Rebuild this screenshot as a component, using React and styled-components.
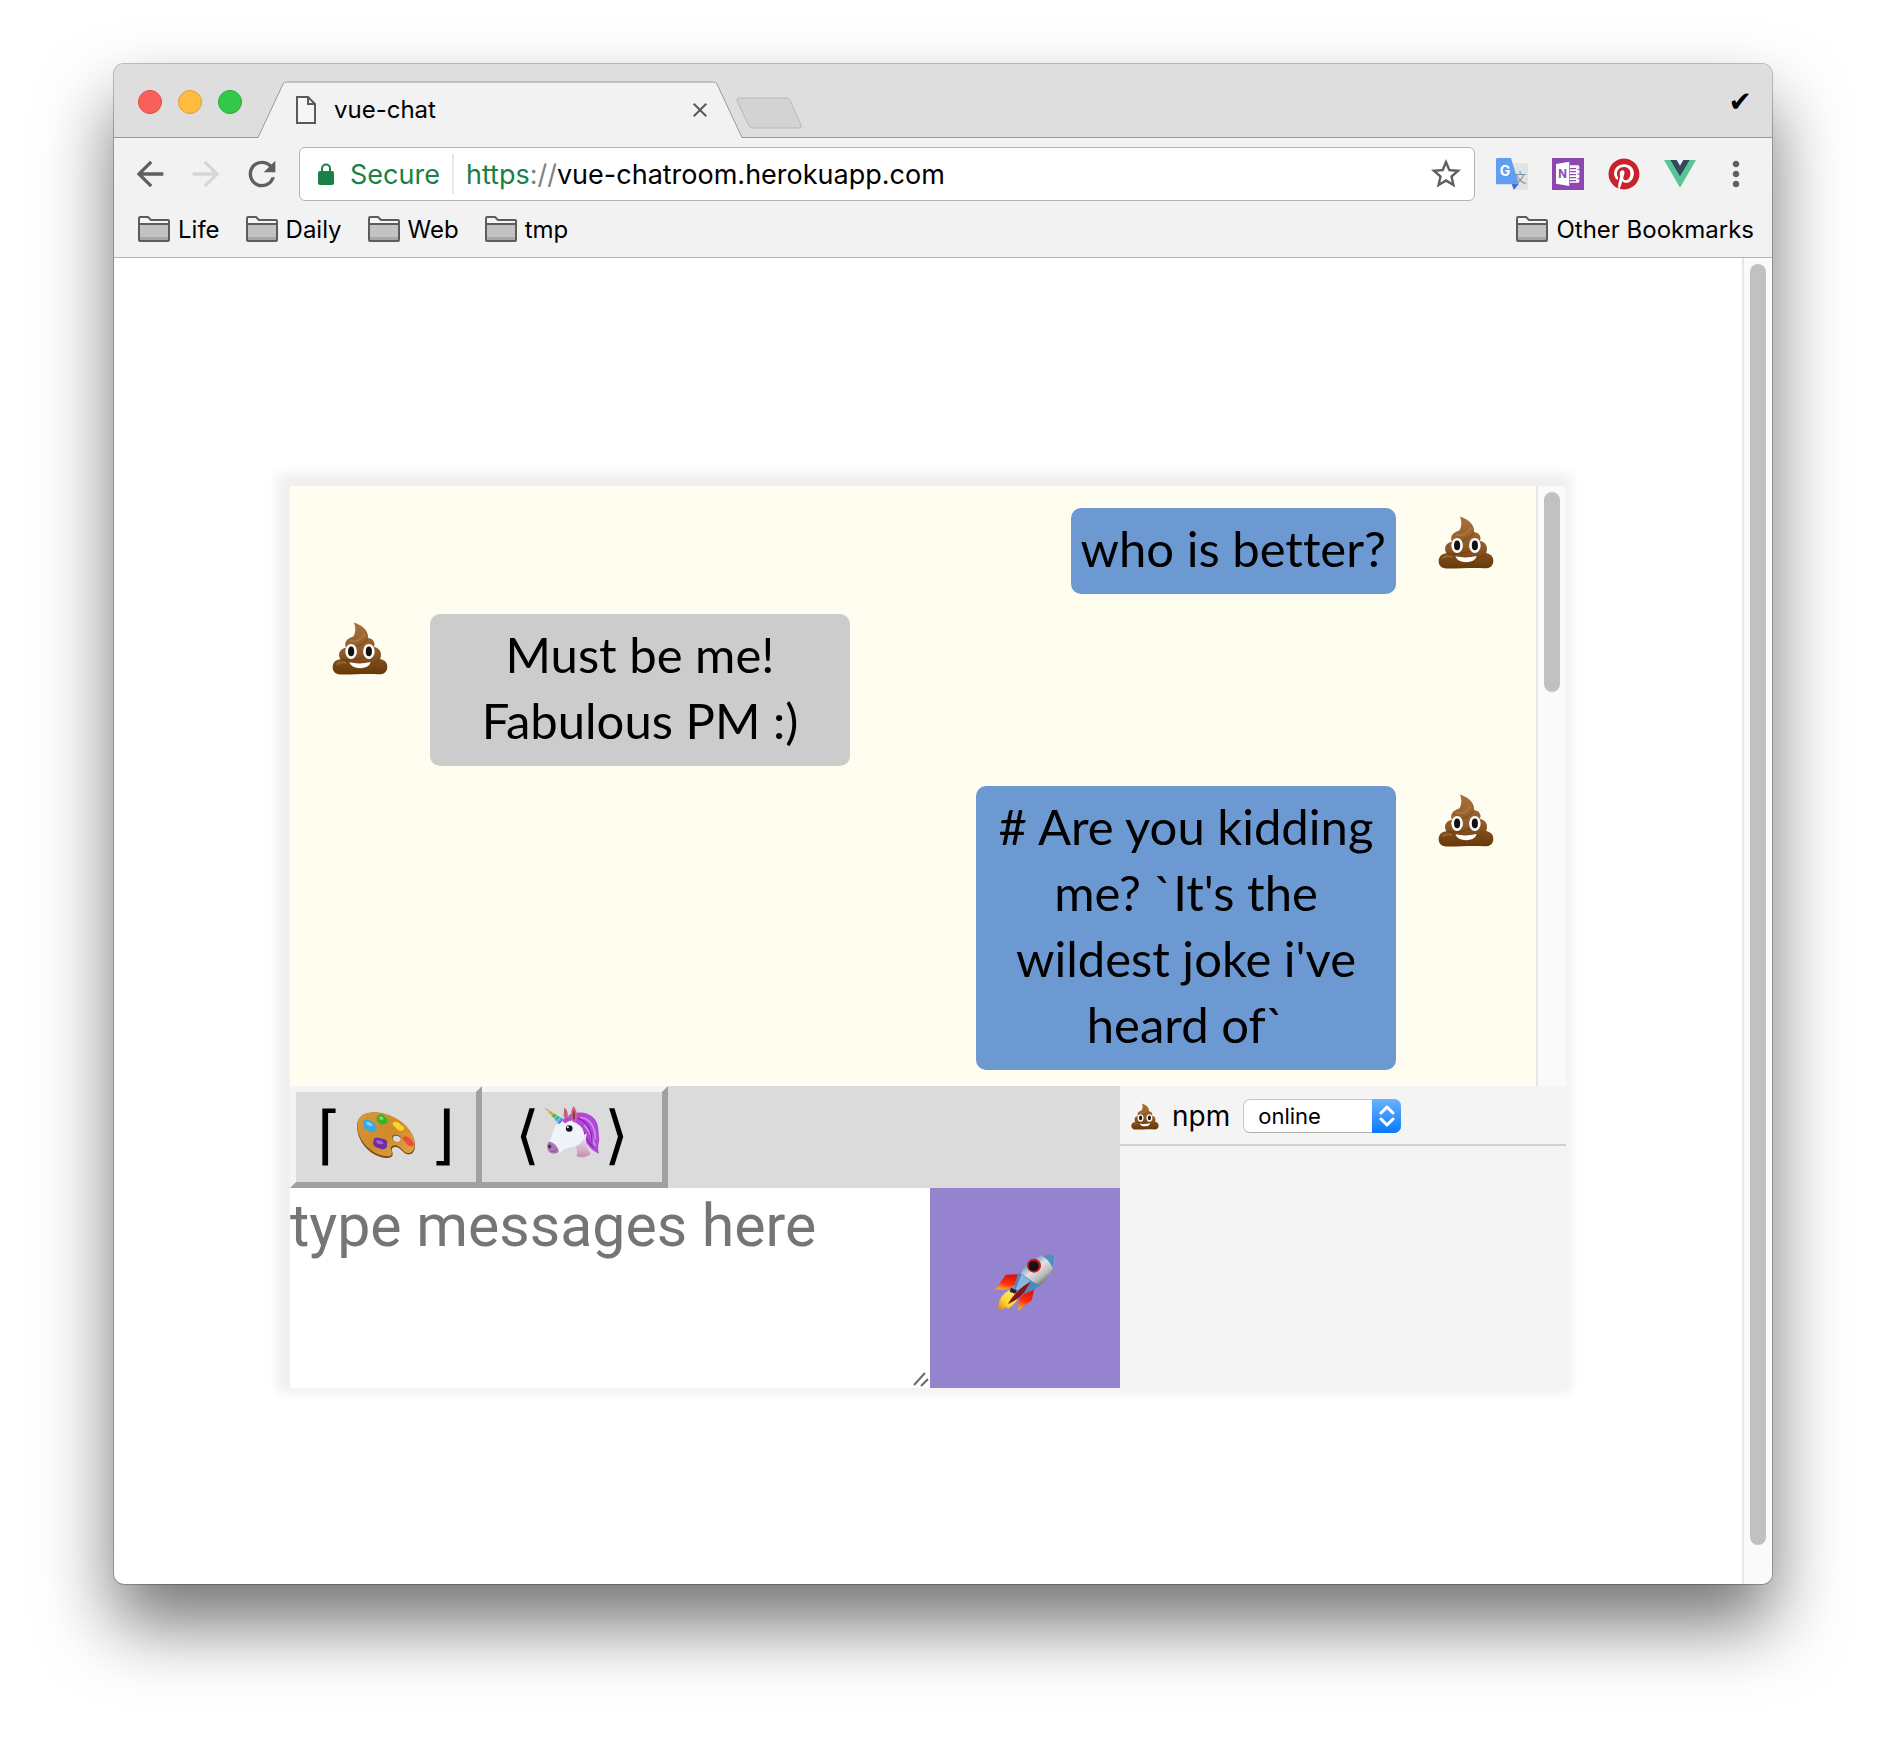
import React from "react";
import styled, { createGlobalStyle } from "styled-components";
import { MdArrowBack, MdArrowForward, MdRefresh, MdStarBorder, MdMoreVert, MdClose } from "react-icons/md";
import { FaPinterest } from "react-icons/fa";

const GlobalStyle = createGlobalStyle`
  *, *::before, *::after { box-sizing: border-box; }
  body {
    margin: 0;
    background: #fff;
    color: #000;
    font-family: Inter, "Liberation Sans", sans-serif;
    font-size: 24px;
  }
  button, input, select, textarea { font: inherit; color: inherit; }
  button { border: 0; padding: 0; background: none; cursor: pointer; }
  svg { display: block; flex: none; }
`;

/* ---------- window frame ---------- */

const Desktop = styled.div`
  padding: 64px 112px 160px 114px;
`;

const Window = styled.div`
  border-radius: 10px;
  background: #fff;
  overflow: hidden;
  box-shadow: 0 0 0 1px rgba(0, 0, 0, 0.24), 0 40px 72px rgba(0, 0, 0, 0.55);
`;

const TitleBar = styled.header`
  display: flex;
  align-items: center;
  height: 74px;
  padding: 2px 20px 0 24px;
  background: #dedede;
  border-bottom: 1px solid #999;
`;

const Lights = styled.div`
  display: flex;
  gap: 16px;
  margin-right: 16px;
`;

const Light = styled.button`
  width: 24px;
  height: 24px;
  border-radius: 50%;
  background: ${(p) => p.$fill};
  border: 1px solid ${(p) => p.$edge};
`;

const Tab = styled.div`
  position: relative;
  display: flex;
  align-items: center;
  align-self: flex-end;
  gap: 18px;
  width: 484px;
  height: 57px;
  margin-bottom: -1px;
  padding: 0 30px 0 38px;
`;

const TabShape = styled.svg`
  position: absolute;
  inset: 0;
`;

const TabTitle = styled.span`
  position: relative;
  flex: 1;
`;

const TabIcon = styled.svg`
  position: relative;
`;

const TabClose = styled.button`
  position: relative;
  width: 24px;
  height: 24px;
  color: #5a5a5a;
`;

const NewTab = styled.button`
  align-self: flex-end;
  margin: 0 0 8px -6px;
`;

const Profile = styled.span`
  margin-left: auto;
  font-family: "DejaVu Sans", sans-serif;
  font-size: 28px;
`;

/* ---------- toolbar and bookmarks ---------- */

const Toolbar = styled.nav`
  display: flex;
  align-items: center;
  padding: 9px 16px 0;
  background: #f2f2f2;
`;

const NavGroup = styled.div`
  display: flex;
  gap: 16px;
  margin-right: 17px;
`;

const NavButton = styled.button`
  width: 40px;
  height: 40px;
  color: ${(p) => (p.$dim ? "#d6d6d6" : "#5f5f5f")};
`;

const Omnibox = styled.div`
  display: flex;
  align-items: center;
  flex: 1;
  height: 54px;
  padding: 0 10px 0 17px;
  background: #fff;
  border: 1px solid #b4b4b4;
  border-radius: 6px;
  font-size: 27px;
`;

const Secure = styled.span`
  padding: 0 12px 0 15px;
  color: #1a8045;
`;

const Scheme = styled.label`
  display: flex;
  align-items: center;
  align-self: center;
  height: 40px;
  padding-left: 12px;
  border-left: 2px solid #e8e8e8;
  color: #808080;
`;

const SchemeName = styled.span`
  color: #1a8045;
`;

const Address = styled.input`
  flex: 1;
  min-width: 0;
  padding: 0;
  border: 0;
  outline: 0;
  background: transparent;
`;

const StarButton = styled.button`
  width: 36px;
  height: 36px;
  color: #5f5f5f;
`;

const Extensions = styled.div`
  display: flex;
  align-items: center;
  gap: 24px;
  margin: 0 20px 0 21px;
`;

const PinDisc = styled.span`
  display: block;
  border-radius: 50%;
  background: #fff;
  color: #c8232c;
`;

const Bookmarks = styled.div`
  display: flex;
  align-items: center;
  gap: 26px;
  height: 57px;
  padding: 0 18px 0 24px;
  background: #f2f2f2;
  border-bottom: 1px solid #b4b4b4;
`;

const Bookmark = styled.a`
  display: flex;
  align-items: center;
  gap: 8px;
  color: inherit;
  text-decoration: none;
  margin-left: ${(p) => (p.$last ? "auto" : "0")};
`;

/* ---------- page ---------- */

const Viewport = styled.div`
  display: grid;
  grid-template-columns: 1fr 30px;
`;

const Track = styled.div`
  padding: 6px;
  background: #fafafa;
  border-left: 2px solid #e7e7e7;
`;

const Thumb = styled.div`
  width: 16px;
  height: ${(p) => p.$length};
  border-radius: 8px;
  background: #c1c1c1;
`;

const Page = styled.main`
  padding: 228px 176px 196px;
`;

const Chat = styled.section`
  background: #f4f4f4;
  box-shadow: -4px -4px 10px 9px #f0f0f0;
`;

const Scroller = styled.div`
  display: grid;
  grid-template-columns: 1fr 30px;
`;

const Messages = styled.div`
  display: flex;
  flex-direction: column;
  gap: 20px;
  padding: 22px 0 16px;
  background: #fffcf0;
`;

const Message = styled.div`
  display: flex;
  flex-direction: ${(p) => (p.$own ? "row-reverse" : "row")};
  align-items: flex-start;
`;

const Avatar = styled.div`
  display: flex;
  justify-content: center;
  width: 140px;
  padding-top: 8px;
`;

const Bubble = styled.p`
  max-width: 420px;
  margin: 0;
  padding: 7px 10px 13px;
  border-radius: 10px;
  background: ${(p) => (p.$own ? "#6c99d2" : "#ccc")};
  font-family: Lato, "Liberation Sans", sans-serif;
  font-size: 49px;
  line-height: 66px;
  font-variant-ligatures: none;
  text-align: center;
`;

const Lower = styled.div`
  display: grid;
  grid-template-columns: 1fr 446px;
`;

const Tools = styled.div`
  display: flex;
  height: 102px;
  background: #dbdbdb;
`;

const Tool = styled.button`
  display: flex;
  align-items: center;
  justify-content: center;
  gap: ${(p) => p.$gap};
  width: ${(p) => (p.$joined ? "186px" : "192px")};
  padding-bottom: 5px;
  border: 6px solid;
  border-color: #f4f4f4 #a0a0a0 #a0a0a0 #f4f4f4;
  border-left-width: ${(p) => (p.$joined ? "0" : "6px")};
  background: #dbdbdb;
  font-family: "DejaVu Sans", sans-serif;
  font-size: 64px;
  line-height: 1;
`;

const Composer = styled.form`
  display: grid;
  grid-template-columns: 1fr 190px;
  height: 200px;
`;

const Draft = styled.div`
  position: relative;
  display: grid;
`;

const DraftInput = styled.textarea`
  width: 100%;
  padding: 0;
  border: 0;
  outline: 0;
  resize: none;
  background: #fff;
  font-family: Roboto, "Liberation Sans", sans-serif;
  font-size: 59px;
  line-height: 76px;
  &::placeholder { color: #757575; opacity: 1; }
`;

const Grip = styled.svg`
  position: absolute;
  right: 0;
  bottom: 0;
`;

const Send = styled.button`
  display: grid;
  place-items: center;
  padding-bottom: 10px;
  background: #9683cf;
`;

const People = styled.aside`
  background: #f4f4f4;
`;

const Person = styled.div`
  display: flex;
  align-items: center;
  gap: 13px;
  height: 60px;
  padding: 2px 0 0 11px;
  border-bottom: 2px solid #d0d0d0;
`;

const Name = styled.label`
  font-size: 28px;
`;

const Status = styled.div`
  position: relative;
`;

const StatusSelect = styled.select`
  appearance: none;
  display: block;
  width: 158px;
  height: 34px;
  padding: 0 30px 0 14px;
  border: 1px solid #c6c6c6;
  border-bottom-color: #adadad;
  border-radius: 7px;
  background: #fff;
  font-size: 22px;
`;

const Stepper = styled.span`
  position: absolute;
  top: 0;
  right: 0;
  display: grid;
  place-items: center;
  width: 29px;
  height: 34px;
  border-radius: 0 7px 7px 0;
  background: linear-gradient(#6cb3fa, #067aff);
  pointer-events: none;
`;

/* ---------- drawings ---------- */

const Poop = ({ width = 56, height = 53 }) => (
  <svg width={width} height={height} viewBox="-1 -1 164 155" aria-hidden="true">
    <defs>
      <linearGradient id="poop-body" x1="0" y1="0" x2="0" y2="1">
        <stop offset="0" stopColor="#a8713a" />
        <stop offset="0.6" stopColor="#8d5827" />
        <stop offset="1" stopColor="#653805" />
      </linearGradient>
    </defs>
    <path d="M63 0C80 6 106 18 105 46C120 48 127 60 122 72C140 74 147 92 140 107C155 110 162 120 161 132C160 147 148 153 134 152C100 149 70 153 28 153C10 153 0 144 1 130C1 118 10 109 24 108C14 94 22 76 40 74C34 60 40 48 60 42C68 34 70 16 63 0Z" fill="url(#poop-body)" />
    <path d="M42 72C66 76 92 66 103 48M26 108C60 114 110 104 122 74M30 110C70 128 124 126 139 109" fill="none" stroke="#5f350b" strokeOpacity="0.4" strokeWidth="4" />
    <path d="M52 54C70 58 88 50 94 34M14 122C20 116 28 116 38 118" fill="none" stroke="#c48d55" strokeOpacity="0.4" strokeWidth="6" strokeLinecap="round" />
    <ellipse cx="55" cy="85" rx="17" ry="22" fill="#fff" />
    <ellipse cx="107" cy="85" rx="17" ry="22" fill="#fff" />
    <ellipse cx="55" cy="85" rx="9" ry="14" fill="#111" />
    <ellipse cx="107" cy="85" rx="9" ry="14" fill="#111" />
    <path d="M50 117Q81 124 112 116C108 140 56 140 50 117Z" fill="#fff" />
  </svg>
);

const Rocket = () => (
  <svg width="59" height="58" viewBox="47 43 177 174" aria-hidden="true">
    <defs>
      <linearGradient id="rocket-body" x1="0.25" y1="0.2" x2="0.75" y2="0.8">
        <stop offset="0" stopColor="#5f87aa" />
        <stop offset="0.4" stopColor="#e2e4e2" />
        <stop offset="0.7" stopColor="#b9bcbb" />
        <stop offset="1" stopColor="#55595c" />
      </linearGradient>
      <linearGradient id="rocket-fin" x1="0.6" y1="0" x2="0.3" y2="1">
        <stop offset="0" stopColor="#d81408" />
        <stop offset="0.55" stopColor="#fb2d0c" />
        <stop offset="1" stopColor="#fcae2c" />
      </linearGradient>
      <linearGradient id="rocket-fire" x1="1" y1="0" x2="0" y2="1">
        <stop offset="0" stopColor="#fff08a" />
        <stop offset="0.6" stopColor="#fcd62c" />
        <stop offset="1" stopColor="#ee6d18" />
      </linearGradient>
    </defs>
    <path d="M90 150C66 160 54 184 55 196L51 212L62 206L66 211L76 203L84 207C98 198 112 184 114 168Z" fill="url(#rocket-fire)" />
    <path d="M113 104L76 105L46 149L84 151L104 134Z" fill="url(#rocket-fin)" />
    <path d="M162 148L154 182L113 213L116 176L134 160Z" fill="url(#rocket-fin)" />
    <path d="M221 47C190 40 158 56 138 78C120 97 107 120 101 144L121 162C146 160 176 144 196 120C215 98 226 72 221 47Z" fill="url(#rocket-body)" />
    <path d="M118 98L157 126L180 137C162 152 140 161 121 162L101 144C104 128 110 112 118 98Z" fill="#4f86bd" />
    <path d="M124 104L150 124L112 153L106 148Z" fill="#8ab6dd" />
    <path d="M221 47C208 43 196 45 186 49C198 56 210 68 217 84C222 72 223 60 221 47Z" fill="#4f8fc6" />
    <path d="M92 144L110 152L104 162L88 156Z" fill="#23272c" />
    <path d="M150 128C128 138 100 162 83 193C104 184 128 168 136 150Z" fill="#8c1410" />
    <circle cx="161" cy="78" r="21" fill="#c4161c" />
    <circle cx="160" cy="79" r="15" fill="#101216" />
  </svg>
);

const Palette = () => (
  <svg width="60" height="48" viewBox="259 148 181 145" aria-hidden="true">
    <defs>
      <linearGradient id="palette-wood" x1="0" y1="0" x2="1" y2="1">
        <stop offset="0" stopColor="#d69a3c" />
        <stop offset="0.5" stopColor="#cf8a2b" />
        <stop offset="1" stopColor="#e0a648" />
      </linearGradient>
    </defs>
    <path d="M262 192C262 162 290 149 325 153C372 159 412 187 429 220C441 246 440 275 421 279C405 281 400 268 388 260C378 253 365 257 367 267C373 280 370 291 354 290C320 289 285 265 270 230C264 215 262 205 262 192Z" fill="#7a4a12" />
    <path d="M263 189C263 160 291 149 325 152C372 158 411 185 428 217C440 242 439 270 421 275C405 277 400 263 388 255C377 248 362 253 364 263C370 276 368 286 354 285C320 284 286 260 271 226C265 212 263 202 263 189Z" fill="url(#palette-wood)" />
    <ellipse cx="381" cy="230" rx="14" ry="11" transform="rotate(15 381 230)" fill="#8a5a1e" />
    <ellipse cx="382" cy="232" rx="12" ry="9" transform="rotate(15 382 232)" fill="#dbdbdb" />
    <path d="M281 186C277 174 292 170 302 177C316 182 326 196 318 206C308 216 296 212 294 204C282 204 280 196 281 186Z" fill="#35a9e0" />
    <path d="M289 183C296 178 308 185 310 192C302 196 290 192 289 183Z" fill="#7fd0f3" />
    <path d="M322 166C328 154 342 156 346 166C358 172 358 186 344 188C334 192 318 182 322 166Z" fill="#38b526" />
    <path d="M328 167C334 162 342 166 343 172C338 178 328 174 328 167Z" fill="#7ddc62" />
    <path d="M371 183C378 178 388 182 394 190C406 194 408 204 398 207C388 210 380 202 378 196C370 194 368 188 371 183Z" fill="#f7d62c" />
    <path d="M402 226C410 220 424 230 430 240C438 250 432 258 422 254C412 252 410 244 408 240C400 236 398 232 402 226Z" fill="#ee4b3e" />
    <path d="M312 238C310 226 326 228 336 232C350 232 356 240 352 250C356 262 338 268 328 260C314 258 308 248 312 238Z" fill="#6f2da8" />
    <path d="M320 238C328 234 340 240 342 246C334 252 320 248 320 238Z" fill="#a264d6" />
  </svg>
);

const Unicorn = () => (
  <svg width="56" height="60" viewBox="829 128 169 181" aria-hidden="true">
    <defs>
      <linearGradient id="unicorn-horn" x1="0" y1="0" x2="1" y2="1">
        <stop offset="0" stopColor="#e8402c" />
        <stop offset="0.25" stopColor="#f0a52a" />
        <stop offset="0.5" stopColor="#58b848" />
        <stop offset="0.75" stopColor="#2fb3e6" />
        <stop offset="1" stopColor="#a23fd0" />
      </linearGradient>
      <linearGradient id="unicorn-neck" x1="0" y1="0" x2="0" y2="1">
        <stop offset="0" stopColor="#f4f1fb" />
        <stop offset="1" stopColor="#c28fb4" />
      </linearGradient>
    </defs>
    <path d="M888 164L890 136C900 140 902 154 900 170Z" fill="#c4607a" />
    <path d="M902 160C920 146 962 146 980 168C996 186 992 204 995 222C998 240 988 252 995 274C978 270 962 252 950 232L930 196Z" fill="#b04ad6" />
    <path d="M938 166C964 166 984 190 984 232M950 190C966 200 972 224 984 252" fill="none" stroke="#d98bf0" strokeWidth="5" />
    <path d="M930 168C952 172 974 200 974 240M946 202C952 224 966 244 978 256" fill="none" stroke="#8526ad" strokeWidth="4" />
    <path d="M918 232L958 214C952 240 960 262 970 276C956 287 938 288 927 282C932 268 928 256 920 248Z" fill="url(#unicorn-neck)" />
    <path d="M866 188C884 174 912 172 932 186C954 200 956 228 938 244C922 258 900 254 886 264C876 276 858 278 848 272C836 264 836 246 844 238C854 226 854 204 866 188Z" fill="#f1f3fb" />
    <path d="M844 238C852 238 872 250 874 270C866 276 856 276 848 272C836 264 836 246 844 238Z" fill="#a878b4" />
    <ellipse cx="846" cy="253" rx="5" ry="6" fill="#532a5e" />
    <path d="M850 268C858 270 866 266 870 260" fill="none" stroke="#6f3f7c" strokeWidth="2" />
    <path d="M831 136L887 170C884 178 880 182 874 186Z" fill="url(#unicorn-horn)" />
    <path d="M844 145L838 148M856 152L848 160M868 160L858 170M878 167L868 180" stroke="#fff" strokeOpacity="0.8" strokeWidth="2" />
    <path d="M884 174C896 160 918 158 928 172C914 172 900 178 892 184Z" fill="#b04ad6" />
    <path d="M910 172C908 154 912 140 918 132C928 142 932 160 924 178Z" fill="#d5667f" />
    <path d="M916 170C914 158 916 148 919 142C924 152 924 164 921 174Z" fill="#8f3550" />
    <circle cx="905" cy="199" r="10" fill="#17141c" />
    <circle cx="901" cy="195" r="3" fill="#fff" />
  </svg>
);

const FolderIcon = () => (
  <svg width="32" height="26" viewBox="0 0 32 26" aria-hidden="true">
    <path d="M1 3Q1 1 3 1H10Q11 1 12 3L13 4H29Q31 4 31 6V23Q31 25 29 25H3Q1 25 1 23Z" fill="#f6f6f6" />
    <path d="M1 8H31V25H1Z" fill="#c2c2c2" />
    <path d="M1 21H31V25H1Z" fill="#a8a8a8" />
    <path d="M1 3Q1 1 2 1H10L13 4H30Q31 4 31 5V24Q31 25 30 25H2Q1 25 1 24ZM1 8H31" fill="none" stroke="#5c5c5c" strokeWidth="2" />
  </svg>
);

const LockIcon = () => (
  <svg width="18" height="22" viewBox="0 0 18 22" aria-hidden="true">
    <path d="M5 9V5.500a4 4 0 0 1 8 0V9" fill="none" stroke="#1a8045" strokeWidth="2" />
    <rect x="1" y="8" width="16" height="14" rx="2" fill="#1a8045" />
  </svg>
);

const TranslateIcon = () => (
  <svg width="32" height="32" viewBox="0 0 96 96" aria-hidden="true">
    <path d="M40 16H92Q96 16 96 20V92Q96 96 92 96H56Z" fill="#e3e3e3" />
    <text x="53" y="72" fontSize="38" fontFamily="Noto Sans CJK SC, sans-serif" fill="#7894a0">文</text>
    <path d="M47 77H69L53 96Z" fill="#4468c6" />
    <path d="M0 4Q0 0 4 0H45L69 79H4Q0 79 0 75Z" fill="#5f9ff2" />
    <text x="11" y="54" fontSize="42" fontWeight="700" fontFamily="Inter, sans-serif" fill="#fff">G</text>
  </svg>
);

const NotesIcon = () => (
  <svg width="32" height="32" viewBox="0 0 96 96" aria-hidden="true">
    <rect width="96" height="96" fill="#8c48b0" />
    <path d="M12 18L52 11V84L12 77Z" fill="#fff" />
    <path d="M54 22H78Q82 22 82 26V70Q82 74 78 74H54V70H72V66H54V61H72V57H54V52H72V48H54V43H72V39H54V34H72V30H54Z" fill="#fff" />
    <path d="M76 34H84M76 48H84M76 62H84" stroke="#8c48b0" strokeWidth="3" />
    <text x="19" y="61" fontSize="34" fontWeight="700" fontFamily="Inter, sans-serif" fill="#8c48b0">N</text>
  </svg>
);

const VueIcon = () => (
  <svg width="32" height="32" viewBox="0 0 96 96" aria-hidden="true">
    <path d="M0 6H22L48 50L74 6H96L48 89Z" fill="#58c594" />
    <path d="M19 6H38L48 23L58 6H77L48 55Z" fill="#34495e" />
  </svg>
);

/* ---------- app ---------- */

const bookmarks = ["Life", "Daily", "Web", "tmp"];

const conversation = [
  { own: true, text: "who is better?" },
  { own: false, text: "Must be me! Fabulous PM :)" },
  { own: true, text: "# Are you kidding me? `It's the wildest joke i've heard of`" },
];

export default function App() {
  return (
    <Desktop>
      <GlobalStyle />
      <Window>
        <TitleBar>
          <Lights>
            <Light $fill="#fc605b" $edge="#df4744" aria-label="Close window" />
            <Light $fill="#fdbc40" $edge="#de9f34" aria-label="Minimize window" />
            <Light $fill="#34c94a" $edge="#27a934" aria-label="Zoom window" />
          </Lights>
          <Tab>
            <TabShape width="484" height="57" viewBox="0 0 484 57" aria-hidden="true">
              <path d="M0 56.500L25 3Q26 1 29 1H455Q458 1 459 3L484 56.500V57H0Z" fill="#f2f2f2" />
              <path d="M0 56.500L25 3Q26 1 29 1H455Q458 1 459 3L484 56.500" fill="none" stroke="#999" />
            </TabShape>
            <TabIcon width="20" height="28" viewBox="0 0 20 28" aria-hidden="true">
              <path d="M1 1H12L19 8V27H1ZM12 1V8H19" fill="#f6f6f6" stroke="#5a5a5a" strokeWidth="2" />
            </TabIcon>
            <TabTitle>vue-chat</TabTitle>
            <TabClose aria-label="Close tab"><MdClose size={24} /></TabClose>
          </Tab>
          <NewTab aria-label="New tab">
            <svg width="66" height="32" viewBox="0 0 66 32" aria-hidden="true">
              <path d="M3 1H50Q53 1 54 3L65 28Q66 31 63 31H17Q14 31 13 29L1 4Q0 1 3 1Z" fill="#d3d3d3" stroke="#b8b8b8" />
            </svg>
          </NewTab>
          <Profile>✔</Profile>
        </TitleBar>

        <Toolbar>
          <NavGroup>
            <NavButton aria-label="Back"><MdArrowBack size={40} /></NavButton>
            <NavButton $dim aria-label="Forward"><MdArrowForward size={40} /></NavButton>
            <NavButton aria-label="Reload"><MdRefresh size={40} /></NavButton>
          </NavGroup>
          <Omnibox>
            <LockIcon />
            <Secure>Secure</Secure>
            <Scheme htmlFor="address"><SchemeName>https</SchemeName>://</Scheme>
            <Address id="address" defaultValue="vue-chatroom.herokuapp.com" />
            <StarButton aria-label="Bookmark this page"><MdStarBorder size={36} /></StarButton>
          </Omnibox>
          <Extensions>
            <TranslateIcon />
            <NotesIcon />
            <PinDisc><FaPinterest size={32} /></PinDisc>
            <VueIcon />
          </Extensions>
          <NavButton aria-label="Menu"><MdMoreVert size={40} /></NavButton>
        </Toolbar>

        <Bookmarks>
          {bookmarks.map((name) => (
            <Bookmark key={name} href="#"><FolderIcon />{name}</Bookmark>
          ))}
          <Bookmark $last href="#"><FolderIcon />Other Bookmarks</Bookmark>
        </Bookmarks>

        <Viewport>
          <Page>
            <Chat>
              <Scroller>
                <Messages>
                  {conversation.map(({ own, text }) => (
                    <Message key={text} $own={own}>
                      <Avatar><Poop /></Avatar>
                      <Bubble $own={own}>{text}</Bubble>
                    </Message>
                  ))}
                </Messages>
                <Track><Thumb $length="200px" /></Track>
              </Scroller>
              <Lower>
                <div>
                  <Tools>
                    <Tool $gap="14px" aria-label="Colours">⌈<Palette />⌋</Tool>
                    <Tool $joined $gap="4px" aria-label="Unicorn">⟨<Unicorn />⟩</Tool>
                  </Tools>
                  <Composer>
                    <Draft>
                      <DraftInput aria-label="Message" placeholder="type messages here" />
                      <Grip width="18" height="18" viewBox="0 0 18 18" aria-hidden="true">
                        <path d="M2 15L13 3M9 16L16 9" stroke="#6a6a6a" strokeWidth="2" />
                      </Grip>
                    </Draft>
                    <Send type="button" aria-label="Send"><Rocket /></Send>
                  </Composer>
                </div>
                <People>
                  <Person>
                    <Poop width={28} height={27} />
                    <Name htmlFor="status">npm</Name>
                    <Status>
                      <StatusSelect id="status" defaultValue="online">
                        <option>online</option>
                        <option>offline</option>
                      </StatusSelect>
                      <Stepper>
                        <svg width="16" height="22" viewBox="0 0 16 22" aria-hidden="true">
                          <path d="M2 8L8 2L14 8M2 14L8 20L14 14" fill="none" stroke="#fff" strokeWidth="3" strokeLinecap="round" strokeLinejoin="round" />
                        </svg>
                      </Stepper>
                    </Status>
                  </Person>
                </People>
              </Lower>
            </Chat>
          </Page>
          <Track><Thumb $length="calc(100% - 33px)" /></Track>
        </Viewport>
      </Window>
    </Desktop>
  );
}
